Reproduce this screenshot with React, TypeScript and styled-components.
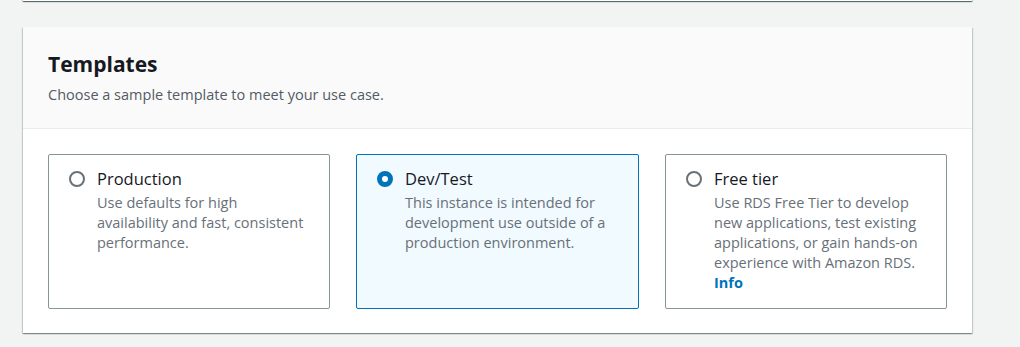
import React from 'react';
import styled, { createGlobalStyle } from 'styled-components';

const GlobalStyle = createGlobalStyle`
  html, body {
    margin: 0;
    padding: 0;
    background: #f2f3f3;
    font-family: "Open Sans", "Noto Sans", Arial, sans-serif;
    color: #16191f;
  }
`;

const Page = styled.div`
  padding: 0 48px 0 23px;
  width: 1020px;
  height: 347px;
  box-sizing: border-box;
  overflow: hidden;
`;

// the bottom edge of the panel above, scrolled out of view
const PrevPanel = styled.div`
  height: 2px;
  margin-top: -1px;
  background: #ffffff;
  box-shadow: 0 1px 1px 0 rgba(0, 28, 36, 0.5), 1px 1px 1px 0 rgba(0, 28, 36, 0.2),
    -1px 1px 1px 0 rgba(0, 28, 36, 0.2);
`;

const Panel = styled.section`
  margin-top: 26px;
  background: #ffffff;
  box-shadow: 0 1px 1px 0 rgba(0, 28, 36, 0.3), 1px 1px 1px 0 rgba(0, 28, 36, 0.15),
    -1px 1px 1px 0 rgba(0, 28, 36, 0.15);
`;

const Header = styled.header`
  background: #fafafa;
  border-bottom: 1px solid #eaeded;
  padding: 22px 25px 23px;
`;

const Title = styled.h2`
  margin: 0;
  font-size: 21px;
  line-height: 30px;
  font-weight: 700;
  color: #16191f;
`;

const Subtitle = styled.p`
  margin: 6px 0 0;
  font-size: 14.5px;
  line-height: 20px;
  color: #545b64;
`;

const Body = styled.div`
  padding: 25px 25px 24px;
  display: grid;
  grid-template-columns: 282px 283px 282px;
  column-gap: 26px;
`;

const Tile = styled.label<{ $selected?: boolean }>`
  display: flex;
  gap: 12px;
  min-height: 153px;
  box-sizing: border-box;
  padding: 15px 20px;
  border: 1px solid ${(p) => (p.$selected ? '#0073bb' : '#879596')};
  border-radius: 2px;
  background: ${(p) => (p.$selected ? '#f1faff' : '#ffffff')};
  cursor: pointer;
`;

const Radio = styled.span<{ $checked?: boolean }>`
  flex: none;
  width: 16px;
  height: 16px;
  margin-top: 1px;
  box-sizing: border-box;
  border-radius: 50%;
  border: ${(p) => (p.$checked ? '5px solid #0073bb' : '2px solid #687078')};
  background: #ffffff;
`;

const TileText = styled.div`
  display: flex;
  flex-direction: column;
`;

const TileLabel = styled.span`
  font-size: 16.5px;
  line-height: 18px;
  color: #16191f;
`;

const TileDesc = styled.span`
  margin-top: 5px;
  font-size: 14.5px;
  line-height: 20px;
  color: #687078;
`;

const InfoLink = styled.a`
  font-size: 14.5px;
  line-height: 20px;
  font-weight: 700;
  color: #0073bb;
  text-decoration: none;
`;

type Option = { id: string; label: string; desc: string; info?: boolean };

const options: Option[] = [
  { id: 'prod', label: 'Production', desc: 'Use defaults for high availability and fast, consistent performance.' },
  { id: 'dev', label: 'Dev/Test', desc: 'This instance is intended for development use outside of a production environment.' },
  {
    id: 'free',
    label: 'Free tier',
    desc: 'Use RDS Free Tier to develop new applications, test existing applications, or gain hands-on experience with Amazon RDS.',
    info: true,
  },
];

export default function App() {
  const [selected, setSelected] = React.useState('dev');
  return (
    <>
      <GlobalStyle />
      <Page>
        <PrevPanel />
        <Panel>
          <Header>
            <Title>Templates</Title>
            <Subtitle>Choose a sample template to meet your use case.</Subtitle>
          </Header>
          <Body>
            {options.map((o) => (
              <Tile key={o.id} $selected={selected === o.id} onClick={() => setSelected(o.id)}>
                <Radio $checked={selected === o.id} />
                <TileText>
                  <TileLabel>{o.label}</TileLabel>
                  <TileDesc>{o.desc}</TileDesc>
                  {o.info && <InfoLink href="#">Info</InfoLink>}
                </TileText>
              </Tile>
            ))}
          </Body>
        </Panel>
      </Page>
    </>
  );
}
